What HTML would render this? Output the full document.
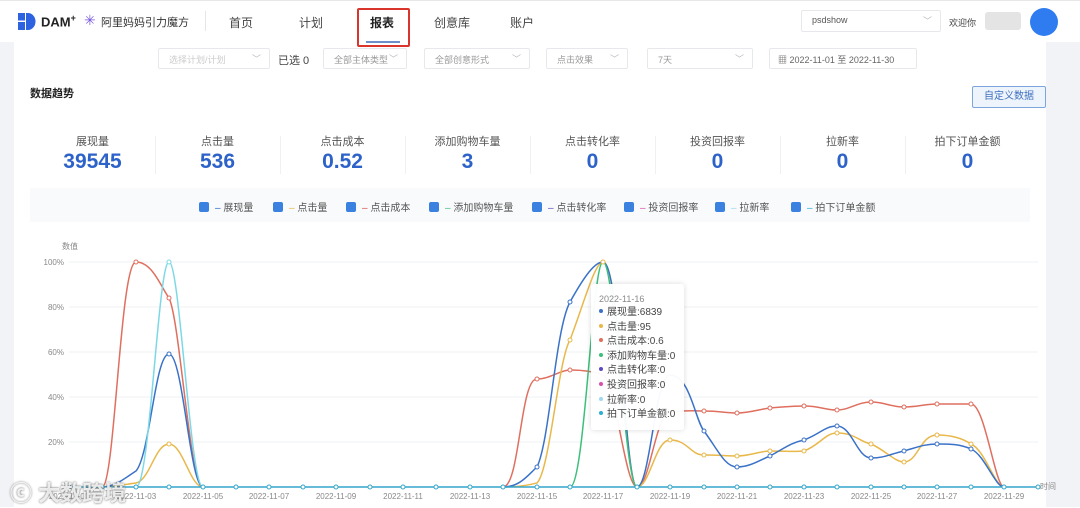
<!DOCTYPE html>
<html><head><meta charset="utf-8"><style>
*{margin:0;padding:0;box-sizing:border-box}
body{width:1080px;height:507px;overflow:hidden;background:#fff;font-family:"Liberation Sans","Noto Sans CJK SC",sans-serif;color:#333;position:relative}
.a{position:absolute;white-space:nowrap}
.sel{position:absolute;height:21px;border:1px solid #e6e8ec;border-radius:2px;font-size:9px;color:#999;padding:4px 10px;background:#fff;white-space:nowrap;overflow:hidden}
.sel i{position:absolute;right:8px;top:3px;font-style:normal;color:#bbb;font-size:9px}
.st{position:absolute;width:125px;text-align:center}
.st .l{font-size:11px;color:#555}
.st .v{font-size:21px;font-weight:bold;color:#2d62c9;margin-top:1px}
.lg{position:absolute;top:199px;font-size:10px;color:#555}
.lg b{display:inline-block;width:10px;height:10px;background:#3b82e0;border-radius:2px;vertical-align:-1px;margin-right:6px}
.tt div{font-size:10px;color:#444;line-height:14.6px}
.tt span{display:inline-block;width:4px;height:4px;border-radius:2px;margin-right:4px;vertical-align:2px}
</style></head><body>
<div class="a" style="left:0;top:42px;width:14px;height:465px;background:#f2f3f6"></div>
<div class="a" style="left:1046px;top:42px;width:34px;height:465px;background:#f2f3f6"></div>
<div class="a" style="left:0;top:0;width:1080px;height:1px;background:#e8e8e8"></div>
<svg class="a" style="left:18px;top:13px" width="18" height="17" viewBox="0 0 18 17"><rect x="0" y="0" width="7" height="7.5" fill="#2d62e0"/><rect x="0" y="9" width="7" height="8" fill="#2d62e0"/><path d="M8 0h2a7.5 8.5 0 0 1 0 17H8z" fill="#2d62e0"/></svg>
<div class="a" style="left:41px;top:13px;font-size:13px;font-weight:bold;color:#222">DAM<sup style="font-size:9px">+</sup></div>
<div class="a" style="left:84px;top:12px;font-size:14px;color:#7a5be0">✳</div>
<div class="a" style="left:101px;top:14px;font-size:11px;color:#333">阿里妈妈引力魔方</div>
<div class="a" style="left:205px;top:11px;width:1px;height:20px;background:#e6e6e6"></div>
<div class="a" style="left:229px;top:14px;font-size:12px;color:#444">首页</div>
<div class="a" style="left:299px;top:14px;font-size:12px;color:#444">计划</div>
<div class="a" style="left:370px;top:14px;font-size:12px;color:#222;font-weight:bold">报表</div>
<div class="a" style="left:366px;top:41px;width:34px;height:2px;background:#6b8fc8"></div>
<div class="a" style="left:357px;top:8px;width:53px;height:39px;border:2px solid #d9352c;border-radius:2px"></div>
<div class="a" style="left:434px;top:14px;font-size:12px;color:#444">创意库</div>
<div class="a" style="left:510px;top:14px;font-size:12px;color:#444">账户</div>
<div class="sel" style="left:801px;top:10px;width:140px;height:22px;color:#555">psdshow<i>﹀</i></div>
<div class="a" style="left:949px;top:16px;font-size:9px;color:#444">欢迎你</div>
<div class="a" style="left:985px;top:12px;width:36px;height:18px;background:#e4e4e4;border-radius:3px"></div>
<div class="a" style="left:1030px;top:8px;width:28px;height:28px;border-radius:50%;background:#2f7cf0"></div>
<div class="sel" style="left:158px;top:48px;width:112px;color:#ccc">选择计划/计划<i>﹀</i></div>
<div class="a" style="left:278px;top:52px;font-size:11px;color:#444">已选 0</div>
<div class="sel" style="left:323px;top:48px;width:84px">全部主体类型<i>﹀</i></div>
<div class="sel" style="left:424px;top:48px;width:106px">全部创意形式<i>﹀</i></div>
<div class="sel" style="left:546px;top:48px;width:82px">点击效果<i>﹀</i></div>
<div class="sel" style="left:647px;top:48px;width:106px">7天<i>﹀</i></div>
<div class="sel" style="left:769px;top:48px;width:148px;color:#666;padding-left:8px">▦ 2022-11-01 至 2022-11-30</div>
<div class="a" style="left:30px;top:85px;font-size:11px;font-weight:bold;color:#222">数据趋势</div>
<div class="a" style="left:972px;top:86px;width:74px;height:22px;border:1px solid #7fa6dc;border-radius:2px;background:#eef4fc;font-size:10px;color:#3f6fbf;text-align:center;line-height:20px">自定义数据</div>
<div class="st" style="left:30px;top:133px"><div class="l">展现量</div><div class="v">39545</div></div>
<div class="st" style="left:155px;top:133px"><div class="l">点击量</div><div class="v">536</div></div>
<div class="st" style="left:280px;top:133px"><div class="l">点击成本</div><div class="v">0.52</div></div>
<div class="st" style="left:405px;top:133px"><div class="l">添加购物车量</div><div class="v">3</div></div>
<div class="st" style="left:530px;top:133px"><div class="l">点击转化率</div><div class="v">0</div></div>
<div class="st" style="left:655px;top:133px"><div class="l">投资回报率</div><div class="v">0</div></div>
<div class="st" style="left:780px;top:133px"><div class="l">拉新率</div><div class="v">0</div></div>
<div class="st" style="left:905px;top:133px"><div class="l">拍下订单金额</div><div class="v">0</div></div>
<div class="a" style="left:155px;top:136px;width:1px;height:38px;background:#f0f0f0"></div>
<div class="a" style="left:280px;top:136px;width:1px;height:38px;background:#f0f0f0"></div>
<div class="a" style="left:405px;top:136px;width:1px;height:38px;background:#f0f0f0"></div>
<div class="a" style="left:530px;top:136px;width:1px;height:38px;background:#f0f0f0"></div>
<div class="a" style="left:655px;top:136px;width:1px;height:38px;background:#f0f0f0"></div>
<div class="a" style="left:780px;top:136px;width:1px;height:38px;background:#f0f0f0"></div>
<div class="a" style="left:905px;top:136px;width:1px;height:38px;background:#f0f0f0"></div>
<div class="a" style="left:30px;top:188px;width:1000px;height:34px;background:#f8fafc"></div>
<div class="lg" style="left:199px"><b></b><span style="color:#2d62c9">–</span> 展现量</div>
<div class="lg" style="left:273px"><b></b><span style="color:#e8b84a">–</span> 点击量</div>
<div class="lg" style="left:346px"><b></b><span style="color:#d9534f">–</span> 点击成本</div>
<div class="lg" style="left:429px"><b></b><span style="color:#3cbf7a">–</span> 添加购物车量</div>
<div class="lg" style="left:532px"><b></b><span style="color:#5b4bc4">–</span> 点击转化率</div>
<div class="lg" style="left:624px"><b></b><span style="color:#d94fb0">–</span> 投资回报率</div>
<div class="lg" style="left:715px"><b></b><span style="color:#9fd8f0">–</span> 拉新率</div>
<div class="lg" style="left:791px"><b></b><span style="color:#2ab0d0">–</span> 拍下订单金额</div>
<svg class="a" style="left:0;top:0" width="1080" height="507">
<g font-size="8" fill="#888" font-family="Liberation Sans,Noto Sans CJK SC,sans-serif">
<text x="62" y="249">数值</text>
<text x="64" y="265" text-anchor="end">100%</text><text x="64" y="310" text-anchor="end">80%</text><text x="64" y="355" text-anchor="end">60%</text><text x="64" y="400" text-anchor="end">40%</text><text x="64" y="445" text-anchor="end">20%</text>
<text x="1040" y="489">时间</text>
<g text-anchor="middle"><text x="69" y="499">2022-11-01</text><text x="136" y="499">2022-11-03</text><text x="203" y="499">2022-11-05</text><text x="269" y="499">2022-11-07</text><text x="336" y="499">2022-11-09</text><text x="403" y="499">2022-11-11</text><text x="470" y="499">2022-11-13</text><text x="537" y="499">2022-11-15</text><text x="603" y="499">2022-11-17</text><text x="670" y="499">2022-11-19</text><text x="737" y="499">2022-11-21</text><text x="804" y="499">2022-11-23</text><text x="871" y="499">2022-11-25</text><text x="937" y="499">2022-11-27</text><text x="1004" y="499">2022-11-29</text></g>
</g>
<g stroke="#eef0f3" stroke-width="1"><line x1="69" y1="262" x2="1038" y2="262"/><line x1="69" y1="307" x2="1038" y2="307"/><line x1="69" y1="352" x2="1038" y2="352"/><line x1="69" y1="397" x2="1038" y2="397"/><line x1="69" y1="442" x2="1038" y2="442"/></g>
<g fill="none" stroke-width="1.5" stroke-linejoin="round">
<path stroke="#df6f5f" d="M102 487C115 487 120 262 136 262C152 262 160 285 169 298C180 320 190 487 203 487M503 487C520 487 520 378 537 379C550 379 560 370 570 370C585 370 595 372 603 375C615 378 625 487 637 487C650 487 655 415 670 412C690 410 695 411 704 411C720 411 725 413 737 413C750 413 760 409 770 408C785 407 790 406 804 406C820 406 825 410 837 410C850 410 857 402 871 402C885 402 890 407 904 407C918 407 925 404 937 404C950 404 965 404 971 404C985 404 995 487 1004 487"/>
<path stroke="#e8b84a" d="M102 487C115 487 120 485 136 483C150 480 155 444 169 444C183 444 190 487 203 487M503 487C520 487 528 485 537 483C550 470 558 360 570 340C585 300 595 262 603 262C620 262 625 487 637 487C650 487 655 440 670 440C688 440 690 455 704 455C720 455 725 456 737 456C750 456 760 451 770 451C785 451 795 452 804 451C820 445 825 433 837 433C855 433 860 442 871 444C885 450 895 462 904 462C918 462 920 435 937 435C955 435 965 440 971 444C985 450 995 487 1004 487"/>
<path stroke="#3a72c8" d="M102 487C115 487 125 478 136 471C150 455 155 354 169 354C183 354 190 487 203 487M503 487C520 487 528 475 537 467C550 440 555 330 570 302C585 275 595 262 603 262C620 262 625 487 637 487C650 487 655 375 670 375C690 375 695 420 704 431C718 450 725 467 737 467C750 467 760 460 770 456C785 448 790 443 804 440C820 434 825 426 837 426C852 426 857 458 871 458C885 458 890 454 904 451C918 447 925 444 937 444C950 444 960 444 971 449C985 455 995 487 1004 487"/>
<path stroke="#7dd8e6" d="M136 487C150 487 158 262 169 262C180 262 190 487 203 487"/>
<path stroke="#3cbf7a" d="M570 487C585 487 592 262 603 262C615 262 625 487 637 487"/>
<line stroke="#34a6cc" x1="69" y1="487" x2="1038" y2="487"/>
</g>
<g fill="#fff" stroke="#34a6cc" stroke-width="1">
<circle cx="69" cy="487" r="2"/><circle cx="102" cy="487" r="2"/><circle cx="136" cy="487" r="2"/><circle cx="169" cy="487" r="2"/><circle cx="203" cy="487" r="2"/><circle cx="236" cy="487" r="2"/><circle cx="269" cy="487" r="2"/><circle cx="303" cy="487" r="2"/><circle cx="336" cy="487" r="2"/><circle cx="370" cy="487" r="2"/><circle cx="403" cy="487" r="2"/><circle cx="436" cy="487" r="2"/><circle cx="470" cy="487" r="2"/><circle cx="503" cy="487" r="2"/><circle cx="537" cy="487" r="2"/><circle cx="570" cy="487" r="2"/><circle cx="637" cy="487" r="2"/><circle cx="670" cy="487" r="2"/><circle cx="704" cy="487" r="2"/><circle cx="737" cy="487" r="2"/><circle cx="770" cy="487" r="2"/><circle cx="804" cy="487" r="2"/><circle cx="837" cy="487" r="2"/><circle cx="871" cy="487" r="2"/><circle cx="904" cy="487" r="2"/><circle cx="937" cy="487" r="2"/><circle cx="971" cy="487" r="2"/><circle cx="1004" cy="487" r="2"/><circle cx="1038" cy="487" r="2"/>
</g>
<g fill="#fff" stroke-width="1">
<circle cx="136" cy="262" r="2" stroke="#df6f5f"/><circle cx="169" cy="298" r="2" stroke="#df6f5f"/><circle cx="169" cy="354" r="2" stroke="#3a72c8"/><circle cx="169" cy="444" r="2" stroke="#e8b84a"/><circle cx="169" cy="262" r="2" stroke="#7dd8e6"/>
<circle cx="570" cy="302" r="2" stroke="#3a72c8"/><circle cx="570" cy="340" r="2" stroke="#e8b84a"/><circle cx="570" cy="370" r="2" stroke="#df6f5f"/><circle cx="603" cy="262" r="2" stroke="#e8b84a"/><circle cx="537" cy="379" r="2" stroke="#df6f5f"/><circle cx="537" cy="467" r="2" stroke="#3a72c8"/>
<circle cx="704" cy="411" r="2" stroke="#df6f5f"/><circle cx="737" cy="413" r="2" stroke="#df6f5f"/><circle cx="770" cy="408" r="2" stroke="#df6f5f"/><circle cx="804" cy="406" r="2" stroke="#df6f5f"/><circle cx="837" cy="410" r="2" stroke="#df6f5f"/><circle cx="871" cy="402" r="2" stroke="#df6f5f"/><circle cx="904" cy="407" r="2" stroke="#df6f5f"/><circle cx="937" cy="404" r="2" stroke="#df6f5f"/><circle cx="971" cy="404" r="2" stroke="#df6f5f"/>
<circle cx="704" cy="431" r="2" stroke="#3a72c8"/><circle cx="737" cy="467" r="2" stroke="#3a72c8"/><circle cx="770" cy="456" r="2" stroke="#3a72c8"/><circle cx="804" cy="440" r="2" stroke="#3a72c8"/><circle cx="837" cy="426" r="2" stroke="#3a72c8"/><circle cx="871" cy="458" r="2" stroke="#3a72c8"/><circle cx="904" cy="451" r="2" stroke="#3a72c8"/><circle cx="937" cy="444" r="2" stroke="#3a72c8"/><circle cx="971" cy="449" r="2" stroke="#3a72c8"/>
<circle cx="670" cy="440" r="2" stroke="#e8b84a"/><circle cx="704" cy="455" r="2" stroke="#e8b84a"/><circle cx="737" cy="456" r="2" stroke="#e8b84a"/><circle cx="770" cy="451" r="2" stroke="#e8b84a"/><circle cx="804" cy="451" r="2" stroke="#e8b84a"/><circle cx="837" cy="433" r="2" stroke="#e8b84a"/><circle cx="871" cy="444" r="2" stroke="#e8b84a"/><circle cx="904" cy="462" r="2" stroke="#e8b84a"/><circle cx="937" cy="435" r="2" stroke="#e8b84a"/><circle cx="971" cy="444" r="2" stroke="#e8b84a"/>
</g>
</svg>
<div class="a tt" style="left:591px;top:284px;width:93px;height:146px;background:rgba(255,255,255,0.96);box-shadow:0 0 6px rgba(0,0,0,0.15);border-radius:3px;padding:9px 0 0 8px">
<div style="font-size:9px;color:#888;line-height:13px">2022-11-16</div>
<div><span style="background:#3a72c8"></span>展现量:6839</div>
<div><span style="background:#e8b84a"></span>点击量:95</div>
<div><span style="background:#df6f5f"></span>点击成本:0.6</div>
<div><span style="background:#3cbf7a"></span>添加购物车量:0</div>
<div><span style="background:#5b4bc4"></span>点击转化率:0</div>
<div><span style="background:#d94fb0"></span>投资回报率:0</div>
<div><span style="background:#9fd8f0"></span>拉新率:0</div>
<div><span style="background:#2ab0d0"></span>拍下订单金额:0</div>
</div>
<div class="a" style="left:10px;top:476px;font-size:22px;color:rgba(255,255,255,0.85);font-weight:bold;text-shadow:0 0 2px #555">ⓒ 大数跨境</div>
</body></html>
